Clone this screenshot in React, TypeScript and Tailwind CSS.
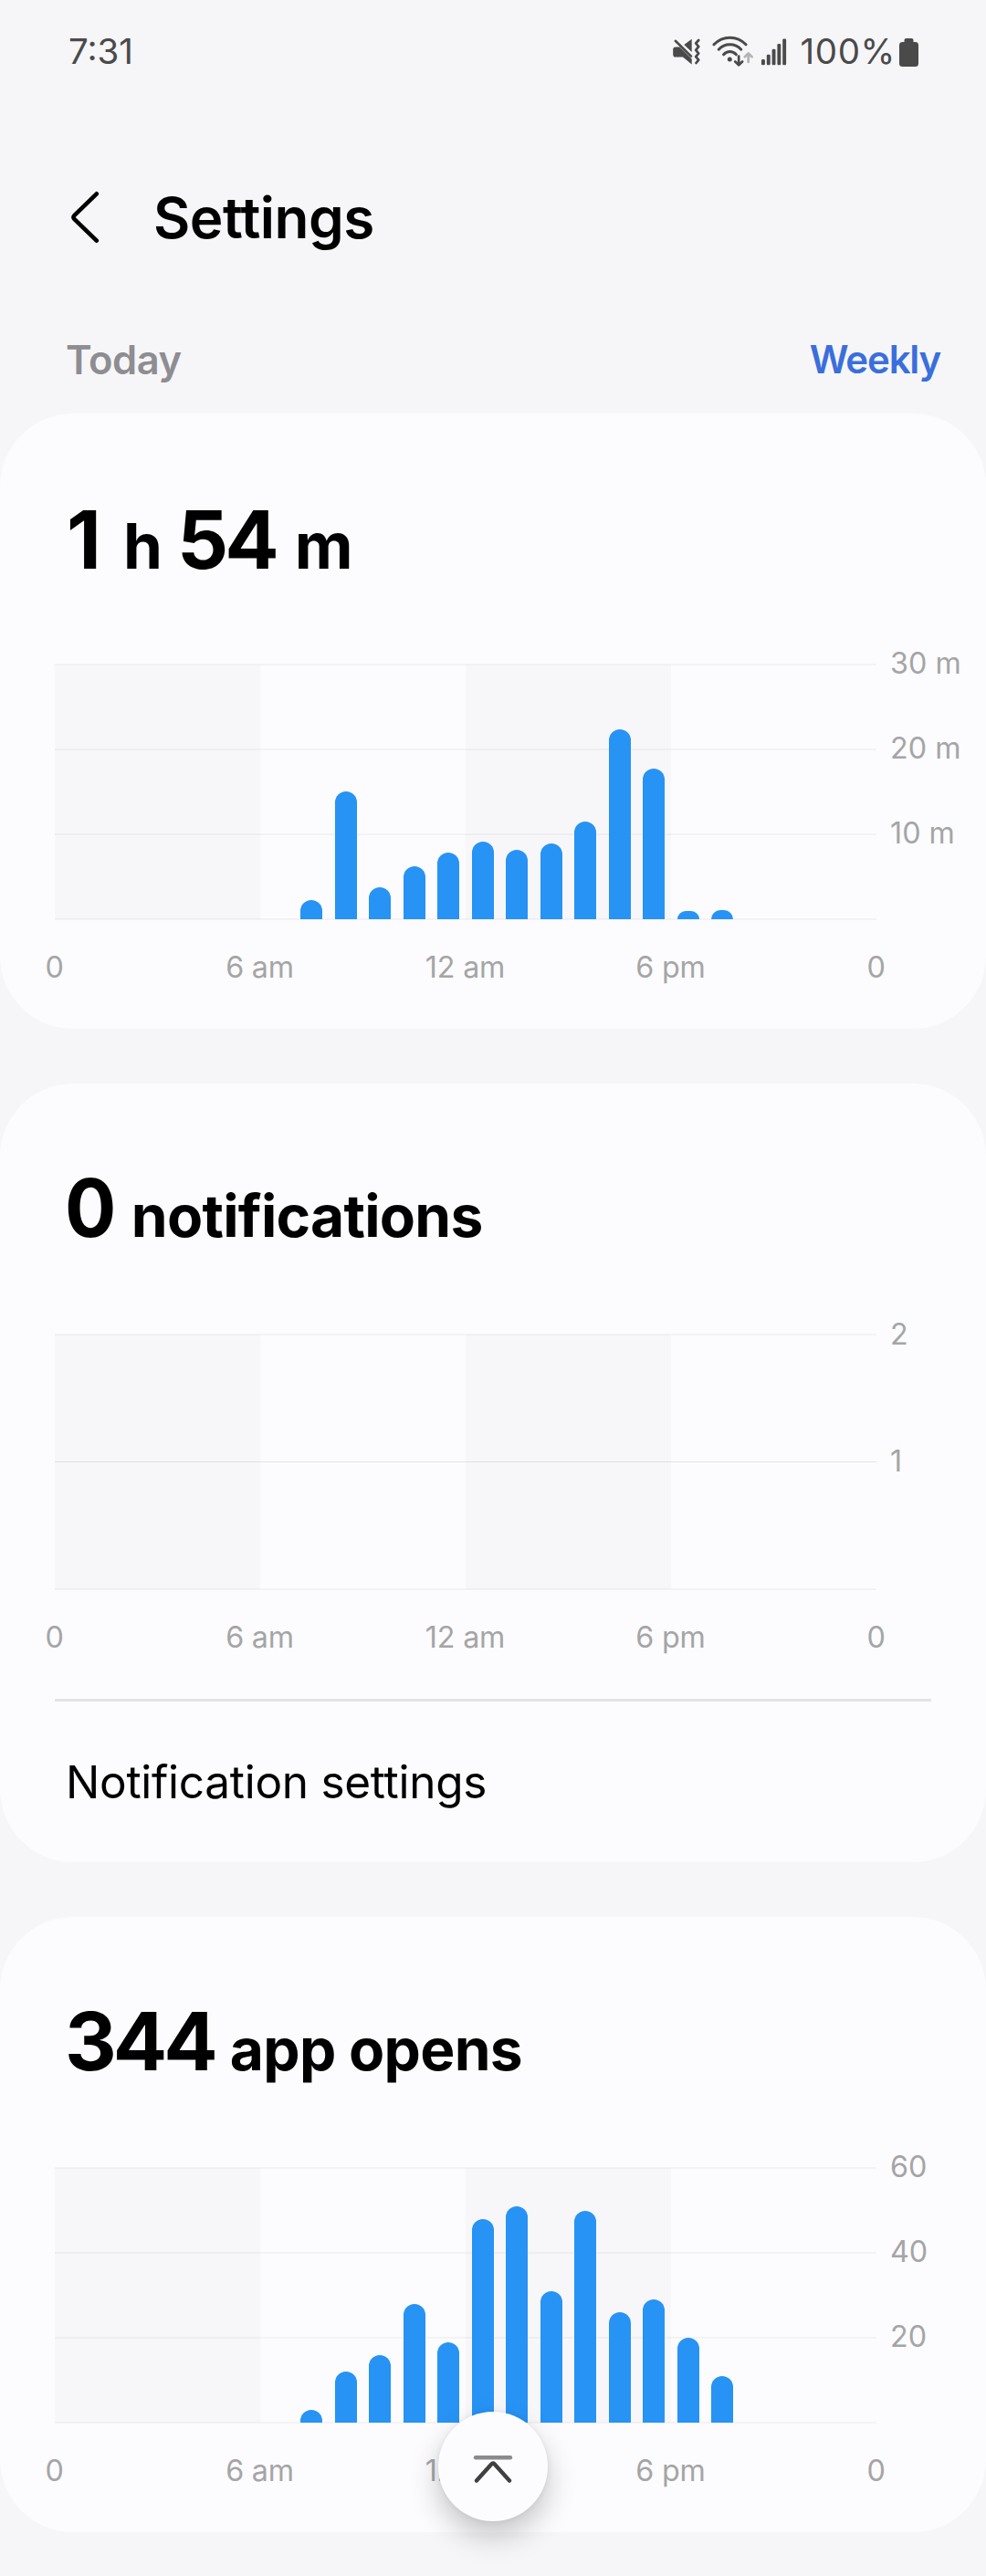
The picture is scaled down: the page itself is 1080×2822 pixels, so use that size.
import type { ReactNode } from "react";

type ChartProps = {
  values: number[];
  max: number;
  labels: string[];
  middleLine?: "thin";
};

const screenMinutes = [
  0, 0, 0, 0, 0, 0, 0, 2.25, 15.03, 3.75, 6.28, 7.87, 9.12, 8.12, 8.95, 11.52, 22.35, 17.75, 0.97, 1.08, 0, 0, 0, 0,
];
const appOpens = [0, 0, 0, 0, 0, 0, 0, 3, 12, 16, 28, 19, 48, 51, 31, 50, 26, 29, 20, 11, 0, 0, 0, 0];
const notifications = new Array<number>(24).fill(0);
const hours = ["0", "6 am", "12 am", "6 pm", "0"];

function MuteVibrateIcon() {
  return (
    <svg width="30" height="30" viewBox="0 0 30 30" fill="none">
      <path d="M3 9.500H7.500L20.700 22.500V28.500L11 20.500H3A2.800 2.800 0 0 1 .2 17.700V12.300A2.800 2.800 0 0 1 3 9.500Z" fill="#4a4a4a" />
      <path d="M12.300 7L20.700 .8V15Z" fill="#4a4a4a" />
      <path d="M2.800 2.800L20 19.600" stroke="#4a4a4a" strokeWidth="2.600" strokeLinecap="round" />
      <path
        d="M28.200 2L25.200 5.500L28.200 9.200L25.200 12.800L28.200 16.500L25.200 20.200L28.200 23.600L25.500 27"
        stroke="#4a4a4a"
        strokeWidth="2.700"
        strokeLinecap="round"
        strokeLinejoin="round"
      />
    </svg>
  );
}

function WifiIcon() {
  return (
    <svg width="46" height="34" viewBox="0 0 46 34" fill="none" strokeLinecap="round">
      <g stroke="#4a4a4a" strokeWidth="3">
        <path d="M2 9.800C11.500-.4 27.500-.4 37 9.800" />
        <path d="M7.200 15.200C14 7.900 25 7.900 31.800 15.200" />
        <path d="M12.600 20.800C16.500 16.500 22.500 16.500 26.400 20.800" />
      </g>
      <circle cx="19.300" cy="26" r="2.500" fill="#4a4a4a" />
      <path d="M29.200 22.500V32M25.300 28.500L29.200 32.300L33.100 28.500" stroke="#4a4a4a" strokeWidth="2.700" strokeLinejoin="round" />
      <path d="M39.700 29V19.600M35.800 23.200L39.700 19.400L43.600 23.200" stroke="#b4b4b5" strokeWidth="2.700" strokeLinejoin="round" />
    </svg>
  );
}

function SignalIcon() {
  return (
    <svg width="28" height="30" viewBox="0 0 28 30" fill="#4a4a4a">
      <rect x="0" y="23" width="3.900" height="6.300" rx="1.300" />
      <rect x="5.800" y="17.800" width="3.900" height="11.500" rx="1.300" />
      <rect x="11.600" y="11.800" width="3.900" height="17.500" rx="1.300" />
      <rect x="17.400" y="6" width="3.900" height="23.300" rx="1.300" />
      <rect x="23.200" y="0.500" width="3.900" height="28.800" rx="1.300" />
    </svg>
  );
}

function BatteryIcon() {
  return (
    <svg width="21" height="31" viewBox="0 0 21 31" fill="#4a4a4a">
      <rect x="5.500" y="0" width="10" height="10" rx="2" />
      <rect x="0" y="4" width="21" height="27" rx="3.500" />
    </svg>
  );
}

function UsageChart({ values, max, labels, middleLine }: ChartProps) {
  return (
    <div>
      <div className="flex h-[279px]">
        <div className="relative ml-[60px] w-[900px]">
          <div className="grid h-full grid-cols-4">
            <div className="bg-black/[0.02]" />
            <div />
            <div className="bg-black/[0.02]" />
            <div />
          </div>
          <div className="absolute inset-x-0 -top-px -bottom-px flex flex-col justify-between">
            {labels.map((label) => (
              <div
                key={label}
                className={
                  middleLine === "thin" && label === "1" ? "h-px bg-black/[0.09]" : "h-0.5 bg-black/[0.036]"
                }
              />
            ))}
            <div className="h-0.5 bg-black/[0.036]" />
          </div>
          <div className="absolute inset-0 grid grid-cols-24 items-end justify-items-center">
            {values.map((value, hour) => (
              <div
                key={hour}
                className="w-6 rounded-t-[12px] bg-[#2793f5]"
                style={{ height: `${(value / max) * 279}px` }}
              />
            ))}
          </div>
        </div>
        <div className="relative ml-[15px] flex flex-col">
          {labels.map((label) => (
            <div
              key={label}
              className={
                labels.length === 2
                  ? "flex h-[139.5px] -translate-y-[70px] items-center text-[32.3px] whitespace-nowrap text-[#a5a5a6]"
                  : "flex h-[93px] -translate-y-[47px] items-center text-[32.3px] whitespace-nowrap text-[#a5a5a6]"
              }
            >
              {label}
            </div>
          ))}
        </div>
      </div>
      <div className="ml-[59.500px] flex h-[105px] w-[900px] items-center justify-between pt-[2px]">
        {hours.map((hour, index) => (
          <span
            key={index}
            className="flex w-0 justify-center text-[32.3px] tracking-[-0.2px] whitespace-nowrap text-[#a5a5a6]"
          >
            {hour}
          </span>
        ))}
      </div>
    </div>
  );
}

function Card({ heading, children }: { heading: ReactNode; children: ReactNode }) {
  return (
    <section className="rounded-[80px] bg-[#fcfcfe]">
      <h2 className="flex h-[275px] items-baseline pt-[92px] font-bold text-black">{heading}</h2>
      {children}
    </section>
  );
}

function Amount({ children }: { children: ReactNode }) {
  return <span className="text-[88px] leading-[88px] tracking-[-4px]">{children}</span>;
}

export default function App() {
  return (
    <div className="relative h-[2822px] w-[1080px] overflow-hidden bg-[#f6f6f8] font-['Inter',sans-serif] antialiased">
      <div className="flex h-[114px] items-center pr-[74px] pl-[75px] text-[38.5px] text-[#4a4a4a]">
        <span>7:31</span>
        <div className="ml-auto flex items-center">
          <MuteVibrateIcon />
          <div className="mb-[2px] ml-[13px]">
            <WifiIcon />
          </div>
          <div className="ml-[8px]">
            <SignalIcon />
          </div>
          <span className="ml-[15px] tracking-[0.6px]">100%</span>
          <div className="ml-[4px]">
            <BatteryIcon />
          </div>
        </div>
      </div>

      <header className="flex h-[248px] items-center pl-[76px]">
        <svg width="34" height="60" viewBox="0 0 34 60" fill="none">
          <path
            d="M29.800 4.300L5.300 28.200Q3.500 30 5.300 31.800L29.800 55.700"
            stroke="#000"
            strokeWidth="4.600"
            strokeLinecap="round"
            strokeLinejoin="round"
          />
        </svg>
        <h1 className="ml-[58px] pt-px text-[62px] font-semibold tracking-[-0.5px] text-black">Settings</h1>
      </header>

      <div className="flex h-[91px] justify-between pr-[50px] pb-[27px] pl-[72px] text-[43.500px] leading-[64px] font-semibold">
        <span className="tracking-[-0.4px] text-[#8e8d92]">Today</span>
        <span className="text-[42px] tracking-[-1.2px] text-[#3a6fdb]">Weekly</span>
      </div>

      <main className="flex flex-col gap-[60px]">
        <Card
          heading={
            <>
              <span className="ml-[73px]">
                <Amount>1</Amount>
              </span>
              <span className="ml-[28px] text-[69px]">h</span>
              <span className="ml-[16px]">
                <Amount>54</Amount>
              </span>
              <span className="ml-[21px] text-[70px]">m</span>
            </>
          }
        >
          <UsageChart values={screenMinutes} max={30} labels={["30 m", "20 m", "10 m"]} />
          <div className="h-[15px]" />
        </Card>

        <Card
          heading={
            <>
              <span className="ml-[71px] origin-left scale-x-[0.95]">
                <Amount>0</Amount>
              </span>
              <span className="ml-[17.500px] text-[64px] tracking-[-0.75px]">notifications</span>
            </>
          }
        >
          <UsageChart values={notifications} max={2} labels={["2", "1"]} middleLine="thin" />
          <div className="mx-[60px] mt-[15px] h-[3px] bg-[#e3e3e5]" />
          <div className="flex h-[176px] items-center pt-px pl-[72px] text-[49.500px] tracking-[-0.28px] text-black">
            Notification settings
          </div>
        </Card>

        <Card
          heading={
            <>
              <span className="ml-[71px]">
                <Amount>344</Amount>
              </span>
              <span className="ml-[17px] text-[64px] tracking-[-0.7px]">app opens</span>
            </>
          }
        >
          <UsageChart values={appOpens} max={60} labels={["60", "40", "20"]} />
          <div className="h-[15px]" />
        </Card>
      </main>

      <button
        aria-label="Scroll to top"
        className="absolute top-[2642px] left-[480px] flex size-[120px] items-center justify-center rounded-full bg-[#fcfcfe] pt-[3px] shadow-[0_16px_32px_rgba(0,0,0,0.22),0_0_6px_rgba(0,0,0,0.07)]"
      >
        <svg width="44" height="32" viewBox="0 0 44 32" fill="none" strokeLinecap="round">
          <path d="M3 4.300H41" stroke="#8b8b8d" strokeWidth="4.400" />
          <path d="M4 29.500L20.500 11.300Q22 9.700 23.500 11.300L40 29.500" stroke="#404040" strokeWidth="4.400" />
        </svg>
      </button>
    </div>
  );
}
